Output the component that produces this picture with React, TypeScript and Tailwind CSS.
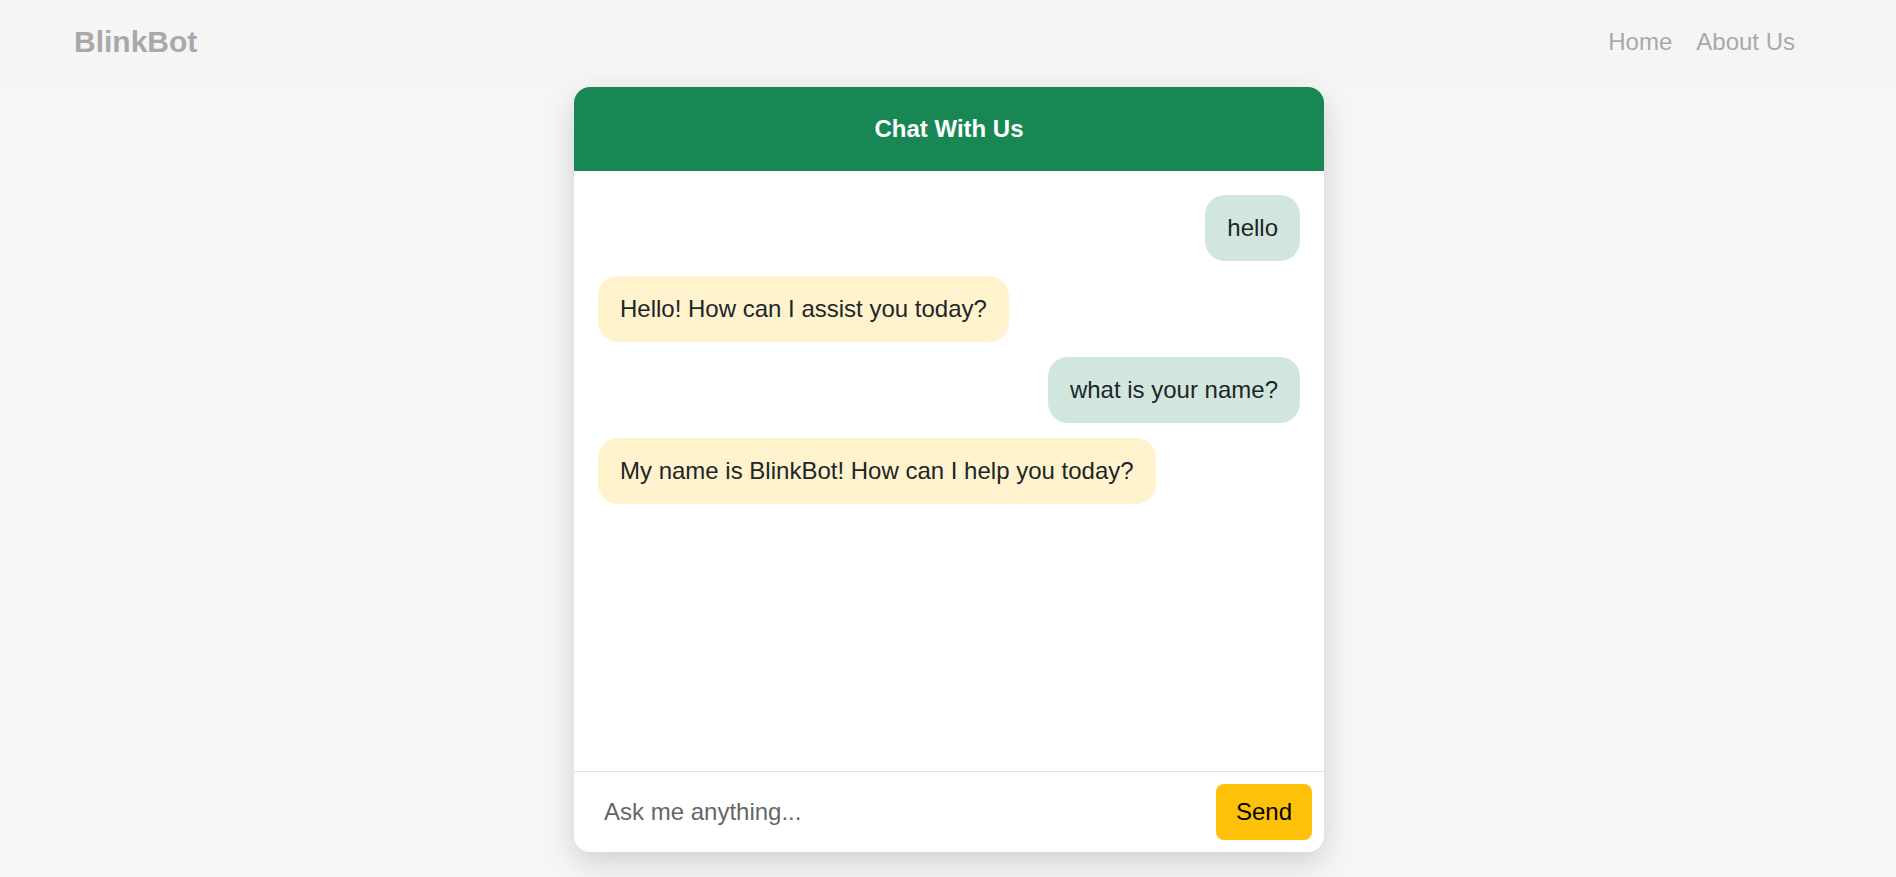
import { useState } from "react";

type Message = {
  from: "user" | "bot";
  text: string;
};

const initialMessages: Message[] = [
  { from: "user", text: "hello" },
  { from: "bot", text: "Hello! How can I assist you today?" },
  { from: "user", text: "what is your name?" },
  { from: "bot", text: "My name is BlinkBot! How can I help you today?" },
];

function Navbar() {
  return (
    <nav className="h-[83px] bg-[#f5f5f5] flex items-center justify-between pl-[74px] pr-[101px]">
      <h1 className="text-[30px] font-bold text-[#a9a9a9]">BlinkBot</h1>
      <ul className="flex gap-6 text-[24px] text-[#a9a9a9]">
        <li className="cursor-pointer">Home</li>
        <li className="cursor-pointer">About Us</li>
      </ul>
    </nav>
  );
}

function ChatBubble({ message }: { message: Message }) {
  return (
    <div
      className={
        message.from === "user"
          ? "self-end bg-[#d1e7dd] text-[#212529] px-[22px] py-[15px] leading-9 text-[24px] rounded-[20px]"
          : "self-start bg-[#fff3cd] text-[#212529] px-[22px] py-[15px] leading-9 text-[24px] rounded-[20px]"
      }
    >
      {message.text}
    </div>
  );
}

export default function App() {
  const [messages, setMessages] = useState<Message[]>(initialMessages);
  const [input, setInput] = useState("");

  const handleSend = () => {
    if (!input.trim()) return;
    setMessages((prevState) => [...prevState, { from: "user", text: input }]);
    setInput("");
  };

  return (
    <div className="min-h-screen bg-[#f6f6f6] font-['Liberation_Sans',Arial,sans-serif]">
      <Navbar />
      <main className="flex justify-center pt-[4px] pl-[2px]">
        <section className="w-[750px] h-[765px] bg-white rounded-2xl overflow-hidden flex flex-col shadow-[0_10px_30px_rgba(0,0,0,0.16)]">
          <header className="h-[84px] shrink-0 bg-[#198754] text-white text-[24px] font-bold flex items-center justify-center">
            Chat With Us
          </header>
          <div className="flex-1 p-6 flex flex-col gap-[15px] overflow-y-auto">
            {messages.map((message, index) => (
              <ChatBubble key={index} message={message} />
            ))}
          </div>
          <div className="shrink-0 border-t border-[#dee2e6] p-3 flex items-center gap-3">
            <input
              className="flex-1 px-[18px] text-[24px] text-[#212529] outline-none placeholder:text-[#666666]"
              placeholder="Ask me anything..."
              value={input}
              onChange={(e) => setInput(e.target.value)}
              onKeyDown={(e) => e.key === "Enter" && handleSend()}
            />
            <button
              className="bg-[#ffc107] text-black text-[24px] leading-9 px-5 py-[10px] rounded-lg"
              onClick={handleSend}
            >
              Send
            </button>
          </div>
        </section>
      </main>
    </div>
  );
}
